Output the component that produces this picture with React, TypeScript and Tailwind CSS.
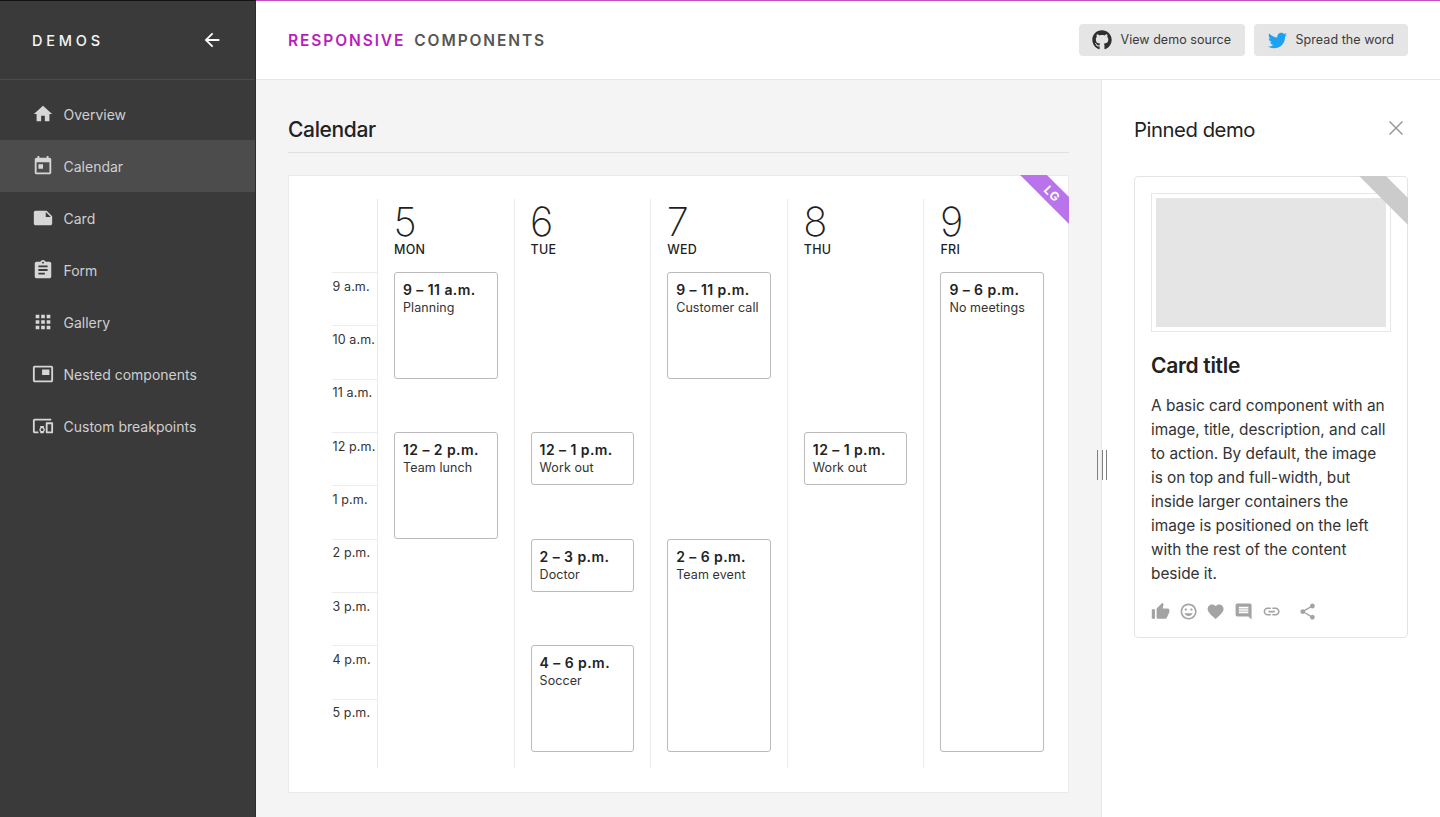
import type { ReactNode } from "react";
import { FaGithub, FaTwitter } from "react-icons/fa";

const icons = {
  back: "M20 11H7.83l5.59-5.59L12 4l-8 8 8 8 1.41-1.41L7.83 13H20v-2z",
  home: "M10 20v-6h4v6h5v-8h3L12 3 2 12h3v8z",
  today: "M19 3h-1V1h-2v2H8V1H6v2H5c-1.11 0-1.99.9-1.99 2L3 19c0 1.1.89 2 2 2h14c1.1 0 2-.9 2-2V5c0-1.1-.9-2-2-2zm0 16H5V8h14v11zM7 10h5v5H7z",
  note: "M22 10l-6-6H4c-1.1 0-2 .9-2 2v12.01c0 1.1.9 1.99 2 1.99l16-.01c1.1 0 2-.89 2-2v-8zm-7-4.5l5.5 5.5H15V5.5z",
  assignment: "M19 3h-4.18C14.4 1.84 13.3 1 12 1c-1.3 0-2.4.84-2.82 2H5c-1.1 0-2 .9-2 2v14c0 1.1.9 2 2 2h14c1.1 0 2-.9 2-2V5c0-1.1-.9-2-2-2zm-7 0c.55 0 1 .45 1 1s-.45 1-1 1-1-.45-1-1 .45-1 1-1zm2 14H7v-2h7v2zm3-4H7v-2h10v2zm0-4H7V7h10v2z",
  apps: "M4 8h4V4H4v4zm6 12h4v-4h-4v4zm-6 0h4v-4H4v4zm0-6h4v-4H4v4zm6 0h4v-4h-4v4zm6-10v4h4V4h-4zm-6 4h4V4h-4v4zm6 6h4v-4h-4v4zm0 6h4v-4h-4v4z",
  nested: "M19 7h-8v6h8V7zm2-4H3c-1.1 0-2 .9-2 2v14c0 1.1.9 1.98 2 1.98h18c1.1 0 2-.88 2-1.98V5c0-1.1-.9-2-2-2zm0 16.01H3V4.98h18v14.03z",
  devices: "M3 6h18V4H3c-1.1 0-2 .9-2 2v12c0 1.1.9 2 2 2h4v-2H3V6zm10 6H9v1.78c-.61.55-1 1.33-1 2.22s.39 1.67 1 2.22V20h4v-1.78c.61-.55 1-1.34 1-2.22s-.39-1.67-1-2.22V12zm-2 5.5c-.83 0-1.5-.67-1.5-1.5s.67-1.5 1.5-1.5 1.5.67 1.5 1.5-.67 1.5-1.5 1.5zM22 8h-6c-.5 0-1 .5-1 1v10c0 .5.5 1 1 1h6c.5 0 1-.5 1-1V9c0-.5-.5-1-1-1zm-1 10h-4v-8h4v8z",
  thumb: "M1 21h4V9H1v12zm22-11c0-1.1-.9-2-2-2h-6.31l.95-4.57.03-.32c0-.41-.17-.79-.44-1.06L14.17 1 7.59 7.59C7.22 7.95 7 8.45 7 9v10c0 1.1.9 2 2 2h9c.83 0 1.54-.5 1.84-1.22l3.02-7.05c.09-.23.14-.47.14-.73v-2z",
  smile: "M11.99 2C6.47 2 2 6.48 2 12s4.47 10 9.99 10C17.52 22 22 17.52 22 12S17.52 2 11.99 2zM12 20c-4.42 0-8-3.58-8-8s3.58-8 8-8 8 3.58 8 8-3.58 8-8 8zm3.5-9c.83 0 1.5-.67 1.5-1.5S16.33 8 15.5 8 14 8.67 14 9.5s.67 1.5 1.5 1.5zm-7 0c.83 0 1.5-.67 1.5-1.5S9.33 8 8.5 8 7 8.67 7 9.5 7.67 11 8.5 11zm3.5 6.5c2.33 0 4.31-1.46 5.11-3.5H6.89c.8 2.04 2.78 3.5 5.11 3.5z",
  heart: "M12 21.35l-1.45-1.32C5.4 15.36 2 12.28 2 8.5 2 5.42 4.42 3 7.5 3c1.74 0 3.41.81 4.5 2.09C13.09 3.81 14.76 3 16.5 3 19.58 3 22 5.42 22 8.5c0 3.78-3.4 6.86-8.55 11.54L12 21.35z",
  comment: "M21.99 4c0-1.1-.89-2-1.99-2H4c-1.1 0-2 .9-2 2v12c0 1.1.9 2 2 2h14l4 4-.01-18zM18 14H6v-2h12v2zm0-3H6V9h12v2zm0-3H6V6h12v2z",
  link: "M3.9 12c0-1.71 1.39-3.1 3.1-3.1h4V7H7c-2.76 0-5 2.24-5 5s2.24 5 5 5h4v-1.9H7c-1.71 0-3.1-1.39-3.1-3.1zM8 13h8v-2H8v2zm9-6h-4v1.9h4c1.71 0 3.1 1.39 3.1 3.1s-1.39 3.1-3.1 3.1h-4V17h4c2.76 0 5-2.24 5-5s-2.24-5-5-5z",
  share: "M18 16.08c-.76 0-1.44.3-1.96.77L8.91 12.7c.05-.23.09-.46.09-.7s-.04-.47-.09-.7l7.05-4.11c.54.5 1.25.81 2.04.81 1.66 0 3-1.34 3-3s-1.34-3-3-3-3 1.34-3 3c0 .24.04.47.09.7L8.04 9.81C7.5 9.31 6.79 9 6 9c-1.66 0-3 1.34-3 3s1.34 3 3 3c.79 0 1.5-.31 2.04-.81l7.12 4.16c-.05.21-.08.43-.08.65 0 1.61 1.31 2.92 2.92 2.92 1.61 0 2.92-1.31 2.92-2.92s-1.31-2.92-2.92-2.92z",
};

type IconName = keyof typeof icons;

function Icon({ name, className }: { name: IconName; className: string }) {
  return (
    <svg viewBox="0 0 24 24" fill="currentColor" className={className} aria-hidden="true">
      <path d={icons[name]} />
    </svg>
  );
}

const nav: { label: string; icon: IconName; active?: boolean }[] = [
  { label: "Overview", icon: "home" },
  { label: "Calendar", icon: "today", active: true },
  { label: "Card", icon: "note" },
  { label: "Form", icon: "assignment" },
  { label: "Gallery", icon: "apps" },
  { label: "Nested components", icon: "nested" },
  { label: "Custom breakpoints", icon: "devices" },
];

function Sidebar() {
  return (
    <nav className="flex w-64 shrink-0 flex-col border-t border-r border-t-[#121212] border-r-[#2d2d2d] bg-[#3a3a3a]">
      <div className="flex h-[79px] shrink-0 items-center justify-between border-b border-[#4b4b4b] pr-8 pl-8">
        <span className="pt-0.5 text-[14.5px] font-medium tracking-[3.8px] text-[#f4f4f4]">DEMOS</span>
        <Icon name="back" className="size-[22px] text-white" />
      </div>
      <ul className="pt-2">
        {nav.map((item) => (
          <li
            key={item.label}
            className={
              item.active
                ? "flex h-13 items-center gap-[9.5px] bg-[#4c4c4c] pl-8 text-[#cfcfcf]"
                : "flex h-13 items-center gap-[9.5px] pl-8 text-[#cfcfcf]"
            }
          >
            <Icon name={item.icon} className="size-[22px] text-[#d6d6d6]" />
            <span className="pt-0.5 text-sm">{item.label}</span>
          </li>
        ))}
      </ul>
    </nav>
  );
}

function HeaderButton({ icon, children }: { icon: ReactNode; children: ReactNode }) {
  return (
    <button className="flex h-8 items-center gap-[8.5px] rounded-[4px] bg-[#e5e5e5] pr-[14px] pl-[13px] text-[12.5px] tracking-[0.05px] text-[#3a3a3a]">
      {icon}
      {children}
    </button>
  );
}

function Header() {
  return (
    <header className="flex h-20 shrink-0 items-center justify-between border-t border-b border-t-[#c34fc7] border-b-[#e6e6e6] bg-white px-8">
      <h1 className="flex gap-[9px] pt-0.5 text-[15.5px] font-semibold tracking-[1.9px] text-[#555]">
        <span className="text-[#b71fbd]">RESPONSIVE</span>
        <span>COMPONENTS</span>
      </h1>
      <div className="flex gap-[9px]">
        <HeaderButton icon={<FaGithub className="size-5 text-[#2f2f2f]" />}>View demo source</HeaderButton>
        <HeaderButton icon={<FaTwitter className="mx-[0.5px] size-[19px] text-[#1da1f2]" />}>Spread the word</HeaderButton>
      </div>
    </header>
  );
}

const hours = ["9 a.m.", "10 a.m.", "11 a.m.", "12 p.m.", "1 p.m.", "2 p.m.", "3 p.m.", "4 p.m.", "5 p.m."];

const days = [
  {
    date: 5,
    name: "MON",
    events: [
      { time: "9 – 11 a.m.", title: "Planning", slot: "row-start-1 row-span-2" },
      { time: "12 – 2 p.m.", title: "Team lunch", slot: "row-start-4 row-span-2" },
    ],
  },
  {
    date: 6,
    name: "TUE",
    events: [
      { time: "12 – 1 p.m.", title: "Work out", slot: "row-start-4 row-span-1" },
      { time: "2 – 3 p.m.", title: "Doctor", slot: "row-start-6 row-span-1" },
      { time: "4 – 6 p.m.", title: "Soccer", slot: "row-start-8 row-span-2" },
    ],
  },
  {
    date: 7,
    name: "WED",
    events: [
      { time: "9 – 11 p.m.", title: "Customer call", slot: "row-start-1 row-span-2" },
      { time: "2 – 6 p.m.", title: "Team event", slot: "row-start-6 row-span-4" },
    ],
  },
  {
    date: 8,
    name: "THU",
    events: [{ time: "12 – 1 p.m.", title: "Work out", slot: "row-start-4 row-span-1" }],
  },
  {
    date: 9,
    name: "FRI",
    events: [{ time: "9 – 6 p.m.", title: "No meetings", slot: "row-start-1 row-span-9" }],
  },
];

function Calendar() {
  return (
    <div className="relative flex h-[618px] border border-[#ebebeb] bg-white pt-[23px] pr-2 pb-6 pl-[43px]">
      <div className="flex w-[45px] shrink-0 flex-col pt-[73px]">
        <div className="grid h-[480px] grid-rows-9">
          {hours.map((hour) => (
            <div
              key={hour}
              className="border-t border-[#ececec] pt-[5.7px] pl-[0.5px] text-[12.5px] leading-4 tracking-[0.12px] whitespace-nowrap text-[#333]"
            >
              {hour}
            </div>
          ))}
        </div>
      </div>
      <div className="grid flex-1 grid-cols-5">
        {days.map((day) => (
          <section key={day.name} className="flex min-w-0 flex-col border-l border-[#ebebeb] px-4">
            <div className="h-[73px] shrink-0 pt-px text-[#1f1f1f]">
              <div className="-ml-[0.5px] text-[40px] leading-[43px] font-[240]">{day.date}</div>
              <div className="text-[12.5px] leading-[14px] font-medium tracking-[0.3px]">{day.name}</div>
            </div>
            <div className="grid h-[480px] shrink-0 grid-rows-9">
              {day.events.map((event) => (
                <article
                  key={event.time}
                  className={`${event.slot} flex flex-col rounded-[3px] border border-[#bbb] bg-white pt-2 pl-2 whitespace-nowrap`}
                >
                  <span className="text-sm leading-[18px] font-semibold tracking-[0.43px] text-[#222]">{event.time}</span>
                  <span className="mt-px text-[12.5px] leading-4 tracking-[0.08px] text-[#333]">{event.title}</span>
                </article>
              ))}
            </div>
          </section>
        ))}
      </div>
      <Ribbon label="LG" />
    </div>
  );
}

function Ribbon({ label }: { label?: string }) {
  return (
    <div className="absolute -top-px -right-px size-[50px] overflow-hidden">
      <div
        className={
          label
            ? "absolute top-[8.5px] -left-3 flex h-[19px] w-[90px] rotate-45 items-center justify-center bg-[#b974ec] pl-px text-xs font-bold tracking-[1px] text-white"
            : "absolute top-[8.5px] -left-3 h-[19px] w-[90px] rotate-45 bg-[#cbcbcb]"
        }
      >
        {label}
      </div>
    </div>
  );
}

function PinnedCard() {
  return (
    <article className="relative h-[462px] rounded-[4px] border border-[#e4e4e4] bg-white px-4 pt-4">
      <div className="h-[139px] border border-[#e6e6e6] p-1">
        <div className="h-full bg-[#e5e5e5]" />
      </div>
      <h3 className="mt-5 text-[21px] leading-7 font-semibold tracking-[-0.3px] text-[#222]">Card title</h3>
      <p className="mt-[14px] text-[15.4px] leading-6 tracking-[-0.02px] whitespace-nowrap text-[#333]">
        A basic card component with an
        <br />
        image, title, description, and call
        <br />
        to action. By default, the image
        <br />
        is on top and full-width, but
        <br />
        inside larger containers the
        <br />
        image is positioned on the left
        <br />
        with the rest of the content
        <br />
        beside it.
      </p>
      <div className="mt-4 flex gap-[8.5px] text-[#a3a3a3]">
        <Icon name="thumb" className="size-[19.2px]" />
        <Icon name="smile" className="size-[19.2px]" />
        <Icon name="heart" className="size-[19.2px]" />
        <Icon name="comment" className="size-[19.2px]" />
        <Icon name="link" className="size-[19.2px]" />
        <Icon name="share" className="ml-[8.5px] size-[19.2px]" />
      </div>
      <Ribbon />
    </article>
  );
}

export default function App() {
  return (
    <div className="flex h-[817px] w-[1440px] overflow-hidden bg-[#f4f4f4] font-[Inter,sans-serif]">
      <Sidebar />
      <div className="flex flex-1 flex-col">
        <Header />
        <div className="flex flex-1">
          <main className="w-[845px] px-8">
            <h2 className="flex h-[73px] items-end border-b border-[#e0e0e0] pb-2 text-[21px] leading-7 font-medium tracking-[-0.35px] text-[#222]">
              Calendar
            </h2>
            <div className="mt-[22px]">
              <Calendar />
            </div>
          </main>
          <aside className="relative flex-1 border-l border-[#e8e8e8] bg-white pr-8 pl-8">
            <div className="flex h-24 items-center justify-between pt-1">
              <h2 className="pb-px text-[20.3px] leading-7 tracking-[-0.45px] text-[#222]">Pinned demo</h2>
              <svg viewBox="0 0 14 14" className="mr-[5px] mb-1 size-[14px]" fill="none" stroke="#999" strokeWidth="1.5">
                <path d="M.5.5l13 13M13.5.5l-13 13" />
              </svg>
            </div>
            <PinnedCard />
            <div className="absolute top-[370px] -left-[5px] flex h-[30px] w-[10px] justify-between">
              <span className="w-px bg-[#808080]" />
              <span className="w-px bg-[#808080]" />
              <span className="w-px bg-[#808080]" />
            </div>
          </aside>
        </div>
      </div>
    </div>
  );
}
